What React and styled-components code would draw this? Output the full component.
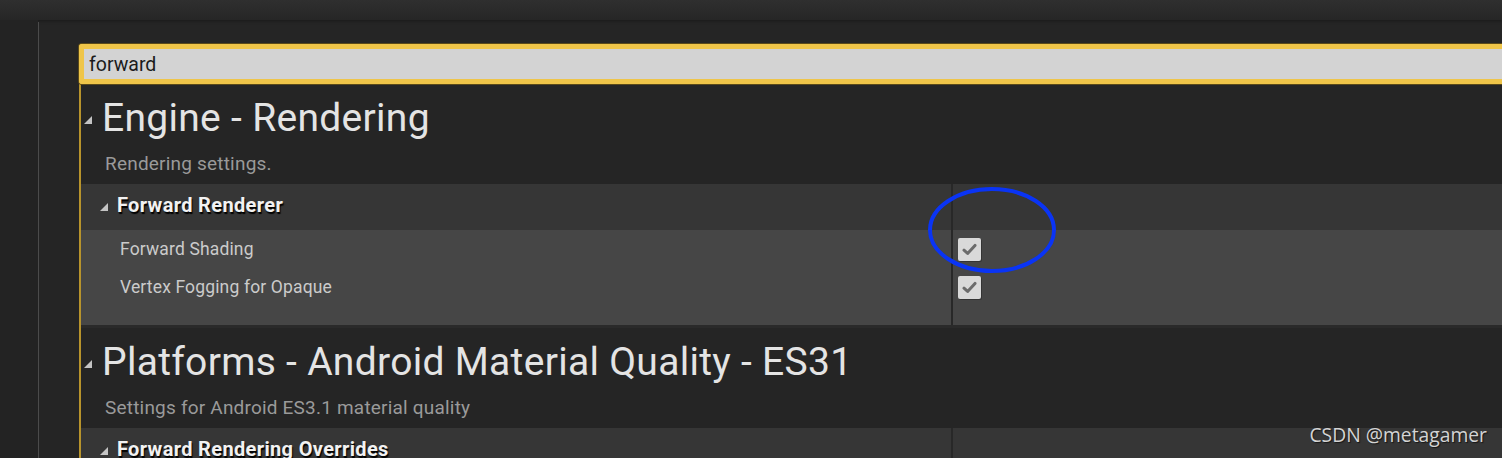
import React from "react";
import styled, { createGlobalStyle } from "styled-components";

const GlobalStyle = createGlobalStyle`
  html, body {
    margin: 0;
    padding: 0;
    background: #252525;
    overflow: hidden;
  }
  body {
    font-family: Roboto, "Liberation Sans", sans-serif;
  }
`;

const sections = [
  {
    title: "Engine - Rendering",
    description: "Rendering settings.",
    category: "Forward Renderer",
    properties: [
      { name: "Forward Shading", checked: true },
      { name: "Vertex Fogging for Opaque", checked: true },
    ],
  },
  {
    title: "Platforms - Android Material Quality - ES31",
    description: "Settings for Android ES3.1 material quality",
    category: "Forward Rendering Overrides",
    properties: [],
  },
];

const App = () => {
  return (
    <>
      <GlobalStyle />
      <Page>
        <TopBar />
        <Body>
          <Gutter />
          <Splitter />
          <Content>
            <Panel>
              <SearchBox>
                <SearchInput defaultValue="forward" spellCheck={false} />
              </SearchBox>
              {sections.map((section) => (
                <Section key={section.title}>
                  <SectionHeading>
                    <Arrow size={8} />
                    {section.title}
                  </SectionHeading>
                  <Description>{section.description}</Description>
                  <CategoryRow>
                    <CategoryName>
                      <Arrow size={8} />
                      {section.category}
                    </CategoryName>
                    <ValueDivider />
                    <div />
                  </CategoryRow>
                  {section.properties.length > 0 && (
                    <PropertyList>
                      {section.properties.map((prop, i) => (
                        <PropertyRow
                          key={prop.name}
                          $last={i === section.properties.length - 1}
                        >
                          <PropertyName>{prop.name}</PropertyName>
                          <ValueDivider />
                          <ValueCell>
                            <CheckBox checked={prop.checked} />
                          </ValueCell>
                        </PropertyRow>
                      ))}
                    </PropertyList>
                  )}
                </Section>
              ))}
            </Panel>
          </Content>
        </Body>
        <Highlight width="132" height="90" viewBox="0 0 132 90">
          <ellipse
            cx="66"
            cy="45"
            rx="62"
            ry="41"
            fill="none"
            stroke="#0a34f5"
            strokeWidth="4"
          />
        </Highlight>
        <Watermark>CSDN @metagamer</Watermark>
      </Page>
    </>
  );
};

const Arrow = ({ size }) => (
  <ArrowIcon width={size} height={size} viewBox="0 0 8 8">
    <polygon points="8,0 8,8 0,8" fill="#c4c4c4" />
  </ArrowIcon>
);

const CheckBox = ({ checked }) => (
  <CheckFrame>
    {checked && (
      <svg width="15" height="13" viewBox="0 0 15 13">
        <path
          d="M2 7.2 L5.6 10.4 L13 2.4"
          fill="none"
          stroke="#6b6b6b"
          strokeWidth="3"
          strokeLinecap="round"
          strokeLinejoin="round"
        />
      </svg>
    )}
  </CheckFrame>
);

export default App;

const Page = styled.div`
  position: relative;
  width: 1502px;
  height: 458px;
  overflow: hidden;
  background: #252525;
`;

const TopBar = styled.div`
  height: 20px;
  background: linear-gradient(#2f2f2f, #2a2a2a 55%, #262626);
  box-shadow: 0 1px 3px rgba(0, 0, 0, 0.35);
`;

const Body = styled.div`
  display: flex;
  height: 438px;
`;

const Gutter = styled.div`
  width: 38px;
  background: #232323;
`;

const Splitter = styled.div`
  width: 1px;
  margin-top: 2px;
  background: #4b4b4b;
`;

const Content = styled.div`
  flex: 1;
  padding: 24px 0 0 40px;
  min-width: 0;
`;

const Panel = styled.div`
  width: 1500px;
  border-left: 2px solid #b8942c;
  background: #252525;
`;

const SearchBox = styled.div`
  margin-left: -2px;
  height: 40px;
  box-sizing: border-box;
  border: 5px solid #efc549;
  border-right: none;
  border-radius: 3px 0 0 3px;
  background: #d3d3d3;
  box-shadow: 0 0 0 1px #5a4a1a;
  display: flex;
  align-items: center;
`;

const SearchInput = styled.input`
  flex: 1;
  border: none;
  outline: none;
  background: transparent;
  padding: 0 0 0 5px;
  font-family: Roboto, "Liberation Sans", sans-serif;
  font-size: 19.5px;
  color: #1b1b1b;
`;

const Section = styled.div`
  padding-top: 11px;
`;

const SectionHeading = styled.div`
  display: flex;
  align-items: center;
  gap: 10px;
  padding-left: 3px;
  height: 46px;
  font-size: 39px;
  letter-spacing: 0.3px;
  color: #e4e4e4;
  white-space: nowrap;
`;

const ArrowIcon = styled.svg`
  flex: none;
  margin-top: 4px;
`;

const Description = styled.div`
  margin: 11px 0 8px 24px;
  height: 24px;
  line-height: 24px;
  font-size: 19px;
  letter-spacing: 0.2px;
  color: #9a9a9a;
`;

const rowGrid = `
  display: grid;
  grid-template-columns: 870px 2px 1fr;
`;

const CategoryRow = styled.div`
  ${rowGrid}
  height: 46px;
  background: #363636;
`;

const CategoryName = styled.div`
  display: flex;
  align-items: center;
  gap: 9px;
  padding: 0 0 4px 19px;
  font-size: 20px;
  font-weight: 700;
  letter-spacing: 0.35px;
  color: #f2f2f2;
  text-shadow: 1px 2px 1px #000;

  svg {
    margin-top: 4px;
  }
`;

const ValueDivider = styled.div`
  background: #282828;
`;

const PropertyList = styled.div`
  background: #464646;
  border-bottom: 3px solid #2a2a2a;
`;

const PropertyRow = styled.div`
  ${rowGrid}
  align-items: start;
  height: ${({ $last }) => ($last ? 57 : 38)}px;

  & > ${ValueDivider} {
    align-self: stretch;
  }
`;

const PropertyName = styled.div`
  display: flex;
  align-items: center;
  height: 38px;
  padding-left: 39px;
  font-size: 17.5px;
  letter-spacing: 0.15px;
  color: #cbcbcb;
`;

const ValueCell = styled.div`
  display: flex;
  align-items: center;
  height: 38px;
  padding-left: 5px;
`;

const CheckFrame = styled.div`
  width: 23px;
  height: 23px;
  box-sizing: border-box;
  border-radius: 2px;
  background: #d9d9d9;
  box-shadow: 1px 1px 0 rgba(0, 0, 0, 0.25);
  display: flex;
  align-items: center;
  justify-content: center;
`;

const Highlight = styled.svg`
  position: absolute;
  left: 926px;
  top: 185px;
  pointer-events: none;
`;

const Watermark = styled.div`
  position: absolute;
  right: 15px;
  bottom: 10px;
  font-family: "Open Sans", "DejaVu Sans", sans-serif;
  font-size: 19.3px;
  color: #d4d4d4;
  text-shadow: 1px 1px 1px rgba(0, 0, 0, 0.6);
  pointer-events: none;
`;
